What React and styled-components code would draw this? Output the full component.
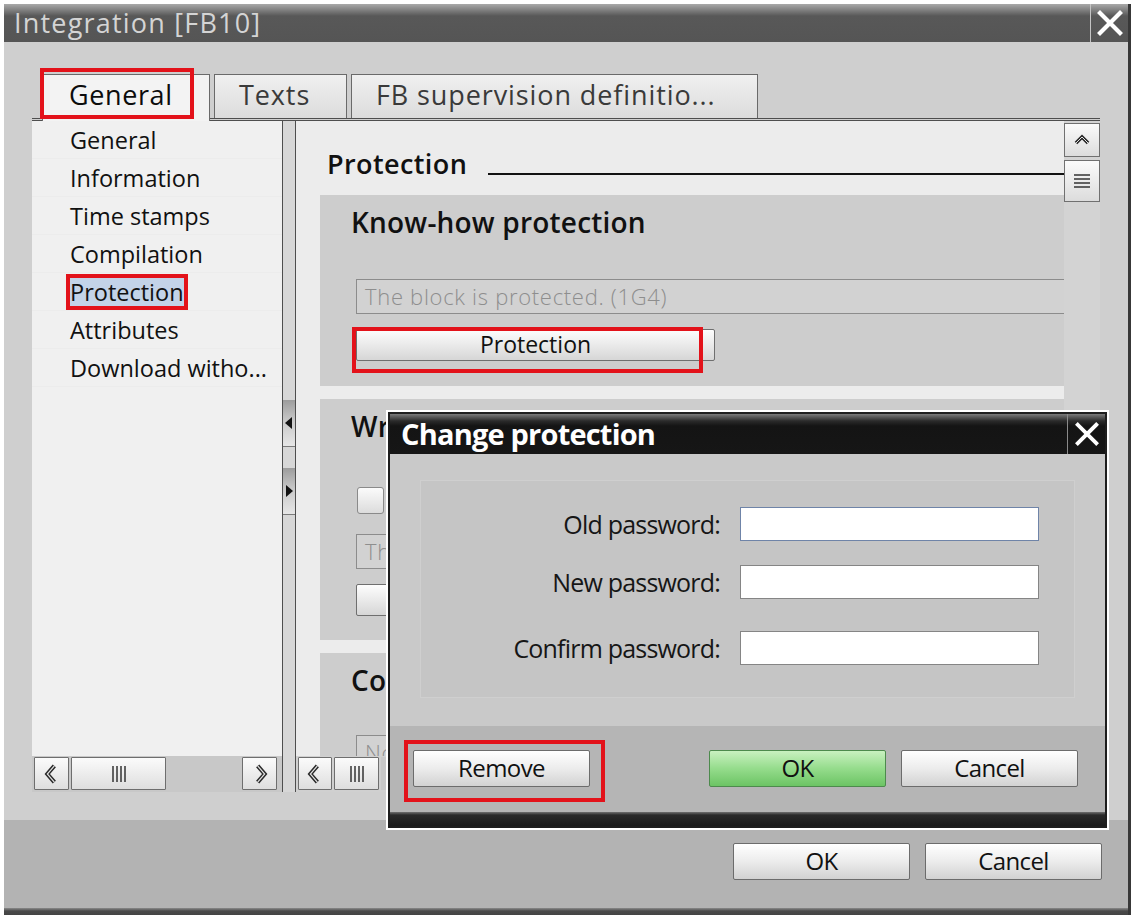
import React from "react";
import styled, { createGlobalStyle, css } from "styled-components";

const GlobalStyle = createGlobalStyle`
  html, body {
    margin: 0;
    padding: 0;
    background: #ffffff;
  }
  body {
    font-family: "Open Sans", "Noto Sans", sans-serif;
    color: #111;
  }
  *, *::before, *::after {
    box-sizing: border-box;
  }
`;

const Page = styled.div`
  width: 1134px;
  height: 920px;
  padding: 4px 0 0 4px;
  overflow: hidden;
`;

const Window = styled.div`
  position: relative;
  width: 1127px;
  height: 911px;
  background: #cfcfcf;
  border-right: 3px solid #383838;
  display: flex;
  flex-direction: column;
`;

const TitleBar = styled.div`
  height: 38px;
  flex: none;
  display: flex;
  align-items: center;
  background: linear-gradient(#a9a9a9 0, #6c6c6c 9px, #585858 12px, #555 100%);
`;

const Title = styled.div`
  flex: 1;
  padding-left: 10px;
  font-size: 27px;
  letter-spacing: 1.2px;
  color: #d4d4d4;
  line-height: 38px;
`;

const CloseBox = styled.div`
  width: 38px;
  height: 100%;
  display: flex;
  align-items: center;
  justify-content: center;
  border-left: 1px solid ${(p) => (p.$dark ? "#8a8a8a" : "#c4c4c4")};
`;

const CloseIcon = ({ size = 26 }) => (
  <svg width={size} height={size} viewBox="0 0 26 26">
    <path d="M3 3 L23 23 M23 3 L3 23" stroke="#fff" strokeWidth="4.2" strokeLinecap="square" />
  </svg>
);

const Body = styled.div`
  flex: 1;
  display: flex;
  flex-direction: column;
  padding: 0 28px 0 28px;
`;

const TabRow = styled.div`
  margin-top: 32px;
  padding-left: 10px;
  display: flex;
  gap: 4px;
  height: 44px;
  position: relative;
  z-index: 2;
`;

const Tab = styled.div`
  position: relative;
  width: ${(p) => p.$w}px;
  height: ${(p) => (p.$active ? 47 : 44)}px;
  border: 1px solid #6a6a6a;
  border-bottom: none;
  background: ${(p) =>
    p.$active ? "#f3f3f3" : "linear-gradient(#f0f0f0, #dcdcdc)"};
  font-size: 27px;
  font-weight: ${(p) => (p.$active ? 500 : 400)};
  color: ${(p) => (p.$active ? "#0c0c0c" : "#3a3a3a")};
  letter-spacing: ${(p) => (p.$active ? "0.6px" : "0.9px")};
  padding: 2px 0 0 ${(p) => p.$pl}px;
  line-height: 36px;
  white-space: nowrap;
  ${(p) =>
    p.$marked &&
    css`
      &::after {
        content: "";
        position: absolute;
        left: -3px;
        top: -7px;
        width: 154px;
        height: 51px;
        border: 4px solid #e3121a;
      }
    `}
`;

const ContentRow = styled.div`
  height: 674px;
  display: flex;
  border-top: 3px double #4e4e4e;
`;

const Nav = styled.div`
  width: 250px;
  background: #f0f0f0;
  display: flex;
  flex-direction: column;
`;

const NavList = styled.div`
  flex: 1;
`;

const NavItem = styled.div`
  height: 38px;
  padding-left: 38px;
  font-size: 23.5px;
  line-height: 38px;
  color: #111;
  border-bottom: 1px solid #ececec;
  white-space: nowrap;
  span {
    display: inline-block;
    line-height: 28px;
    ${(p) =>
      p.$active &&
      css`
        background: #c3d3e8;
        outline: 4px solid #e3121a;
      `}
  }
`;

const ScrollBar = styled.div`
  height: 36px;
  flex: none;
  display: flex;
  align-items: stretch;
  padding: 1px 5px 2px 2px;
  gap: 2px;
  background: #c8c8c8;
`;

const ScrollBtn = styled.div`
  width: ${(p) => p.$w || 35}px;
  flex: none;
  border: 1px solid #6e6e6e;
  border-radius: 1px;
  background: linear-gradient(#fbfbfb, #dedede);
  display: flex;
  align-items: center;
  justify-content: center;
`;

const Track = styled.div`
  flex: 1;
  background: #c8c8c8;
`;

const Splitter = styled.div`
  width: 14px;
  background: #d7d7d7;
  border-left: 1px solid #4e4e4e;
  border-right: 1px solid #4e4e4e;
  display: flex;
  flex-direction: column;
  padding-top: 279px;
  gap: 21px;
`;

const SplitBtn = styled.div`
  height: 47px;
  background: linear-gradient(#9c9c9c, #c8c8c8 45%, #e6e6e6);
  border-bottom: 1px solid #7a7a7a;
  display: flex;
  align-items: center;
  justify-content: center;
`;

const Triangle = ({ dir }) => (
  <svg width="8" height="12" viewBox="0 0 8 12">
    <path d={dir === "left" ? "M7 0 L0 6 L7 12 Z" : "M1 0 L8 6 L1 12 Z"} fill="#111" />
  </svg>
);

const Chevron = ({ dir = "left", size = 28 }) => {
  const pts = {
    left: "14,5 8,12 14,19",
    right: "10,5 16,12 10,19",
    up: "6,15 12,9 18,15",
  }[dir];
  return (
    <svg width={size} height={size} viewBox="0 0 24 24">
      <polyline points={pts} fill="none" stroke="#2a2a2a" strokeWidth="3.6" strokeLinejoin="miter" />
      <polyline points={pts} fill="none" stroke="#e4e4e4" strokeWidth="1" strokeLinejoin="miter" />
    </svg>
  );
};

const Grip = ({ vertical }) =>
  vertical ? (
    <svg width="18" height="16" viewBox="0 0 18 16">
      {[2, 6, 10, 14].map((y) => (
        <line key={y} x1="1" x2="17" y1={y} y2={y} stroke="#333" strokeWidth="1.5" />
      ))}
    </svg>
  ) : (
    <svg width="16" height="18" viewBox="0 0 16 18">
      {[2, 6, 10, 14].map((x) => (
        <line key={x} x1={x} x2={x} y1="1" y2="17" stroke="#333" strokeWidth="1.5" />
      ))}
    </svg>
  );

const RightPanel = styled.div`
  flex: 1;
  display: grid;
  grid-template-columns: 1fr 36px;
  grid-template-rows: 1fr 36px;
  background: #ececec;
  min-width: 0;
`;

const ScrollArea = styled.div`
  overflow: hidden;
  min-width: 0;
  display: flex;
  flex-direction: column;
`;

const HeadRow = styled.div`
  height: 74px;
  flex: none;
  display: flex;
  align-items: flex-end;
  padding: 0 0 16px 31px;
`;

const HeadText = styled.div`
  font-size: 27px;
  font-weight: 600;
  line-height: 30px;
  letter-spacing: 0.4px;
`;

const HeadLine = styled.div`
  flex: 1;
  margin: 0 0 4px 21px;
  border-bottom: 2px solid #111;
`;

const Section = styled.div`
  flex: none;
  margin: 0 0 ${(p) => p.$mb ?? 13}px 24px;
  padding: 12px 0 ${(p) => p.$pb || 0}px 31px;
  background: #cdcdcd;
  display: flex;
  flex-direction: column;
  align-items: flex-start;
`;

const SectionTitle = styled.div`
  font-size: 28px;
  font-weight: 600;
  line-height: 30px;
  letter-spacing: 0.2px;
  white-space: nowrap;
`;

const InfoField = styled.div`
  align-self: stretch;
  margin: ${(p) => p.$mt}px 0 0 5px;
  height: 35px;
  border: 1px solid #8c8c8c;
  border-right: none;
  background: #d2d2d2;
  padding-left: 8px;
  font-size: 22px;
  line-height: 32px;
  color: #8e8e8e;
  font-weight: 300;
  letter-spacing: 0.7px;
  white-space: nowrap;
`;

const PanelButton = styled.div`
  position: relative;
  margin: ${(p) => p.$mt}px 0 0 5px;
  width: ${(p) => p.$w}px;
  height: 32px;
  border: 1px solid #6f6f6f;
  border-radius: 2px;
  background: linear-gradient(#fdfdfd, #e8e8e8 55%, #d6d6d6);
  font-size: 23px;
  line-height: 29px;
  text-align: center;
  white-space: nowrap;
  ${(p) =>
    p.$marked &&
    css`
      &::after {
        content: "";
        position: absolute;
        left: -5px;
        top: -3px;
        width: 351px;
        height: 46px;
        border: 4px solid #e3121a;
      }
    `}
`;

const CheckRow = styled.div`
  margin: ${(p) => p.$mt}px 0 0 6px;
  display: flex;
  align-items: center;
  gap: 12px;
  font-size: 22px;
`;

const CheckBox = styled.div`
  width: 27px;
  height: 27px;
  border: 1px solid #8a8a8a;
  border-radius: 3px;
  background: linear-gradient(#fbfbfb, #dcdcdc);
`;

const VScroll = styled.div`
  background: #d3d3d3;
  display: flex;
  flex-direction: column;
  gap: 3px;
  padding: 2px 0 0 0;
`;

const VBtn = styled.div`
  height: ${(p) => p.$h}px;
  border: 1px solid #707070;
  background: linear-gradient(#fbfbfb, #dcdcdc);
  display: flex;
  align-items: center;
  justify-content: center;
`;

const Corner = styled.div`
  background: #cfcfcf;
`;

const HScroll = styled(ScrollBar)`
  padding: 1px 0 2px 2px;
  background: #d0d0d0;
`;

const Gap = styled.div`
  height: 28px;
  flex: none;
`;

const Footer = styled.div`
  height: 88px;
  flex: none;
  margin: 0 -28px;
  background: #b3b3b3;
  display: flex;
  justify-content: flex-end;
  align-items: flex-start;
  gap: 15px;
  padding: 23px 26px 0 0;
`;

const BottomEdge = styled.div`
  height: 7px;
  flex: none;
  margin: 0 -28px;
  background: linear-gradient(#8a8a8a, #4a4a4a 3px, #444);
`;

const Button = styled.div`
  width: 177px;
  height: 37px;
  flex: none;
  border: 1px solid ${(p) => (p.$green ? "#4d8a4d" : "#6c6c6c")};
  border-radius: 2px;
  background: ${(p) =>
    p.$green
      ? "linear-gradient(#c9f1c0, #95dc8c 50%, #6cc464)"
      : "linear-gradient(#ffffff, #ececec 50%, #d2d2d2)"};
  font-size: 24px;
  letter-spacing: -0.6px;
  line-height: 34px;
  text-align: center;
  color: #111;
`;

const Dialog = styled.div`
  position: absolute;
  left: 382px;
  top: 406px;
  width: 723px;
  height: 420px;
  border: 2px solid #ffffff;
  z-index: 5;
`;

const DialogInner = styled.div`
  height: 100%;
  border: 2px solid #1e1e1e;
  display: flex;
  flex-direction: column;
  background: #c9c9c9;
`;

const DialogTitleBar = styled.div`
  height: 40px;
  flex: none;
  display: flex;
  align-items: center;
  background: linear-gradient(#7a7a7a 0, #2a2a2a 7px, #141414 12px, #161616 100%);
`;

const DialogTitle = styled.div`
  flex: 1;
  padding-left: 11px;
  font-size: 29px;
  font-weight: 700;
  letter-spacing: -0.8px;
  color: #ffffff;
  line-height: 40px;
`;

const DialogBody = styled.div`
  height: 272px;
  flex: none;
  padding: 26px 30px 28px 30px;
`;

const FieldPanel = styled.div`
  height: 100%;
  background: #c5c5c5;
  border: 1px solid #cfcfcf;
  padding-top: 26px;
  display: flex;
  flex-direction: column;
`;

const FieldRow = styled.div`
  display: flex;
  align-items: center;
  gap: 20px;
  margin-top: ${(p) => p.$mt || 0}px;
`;

const FieldLabel = styled.div`
  width: 299px;
  text-align: right;
  font-size: 25px;
  letter-spacing: -0.8px;
  color: #161616;
  white-space: nowrap;
`;

const PassInput = styled.div`
  width: 299px;
  height: 34px;
  background: #ffffff;
  border: 1px solid ${(p) => (p.$focus ? "#6f84a8" : "#858585")};
`;

const DialogButtons = styled.div`
  height: 86px;
  flex: none;
  background: #b5b5b5;
  display: flex;
  align-items: flex-start;
  padding: 24px 27px 0 14px;
  gap: 15px;
`;

const RedFrame = styled.div`
  border: 4px solid #e3121a;
  padding: 6px 11px 11px 5px;
  margin: -10px auto 0 0;
`;

const DialogBottom = styled.div`
  flex: 1;
  background: linear-gradient(#707070, #2a2a2a 3px, #1a1a1a);
`;

const navItems = [
  "General",
  "Information",
  "Time stamps",
  "Compilation",
  "Protection",
  "Attributes",
  "Download witho...",
];

export default function App() {
  return (
    <Page>
      <GlobalStyle />
      <Window>
        <TitleBar>
          <Title>Integration [FB10]</Title>
          <CloseBox>
            <CloseIcon />
          </CloseBox>
        </TitleBar>
        <Body>
          <TabRow>
            <Tab $w={168} $pl={26} $active $marked>
              General
            </Tab>
            <Tab $w={133} $pl={24}>
              Texts
            </Tab>
            <Tab $w={407} $pl={24}>
              FB supervision definitio...
            </Tab>
          </TabRow>
          <ContentRow>
            <Nav>
              <NavList>
                {navItems.map((item) => (
                  <NavItem key={item} $active={item === "Protection"}>
                    <span>{item}</span>
                  </NavItem>
                ))}
              </NavList>
              <ScrollBar>
                <ScrollBtn $w={35}>
                  <Chevron dir="left" />
                </ScrollBtn>
                <ScrollBtn $w={95}>
                  <Grip />
                </ScrollBtn>
                <Track />
                <ScrollBtn $w={35}>
                  <Chevron dir="right" />
                </ScrollBtn>
              </ScrollBar>
            </Nav>
            <Splitter>
              <SplitBtn>
                <Triangle dir="left" />
              </SplitBtn>
              <SplitBtn>
                <Triangle dir="right" />
              </SplitBtn>
            </Splitter>
            <RightPanel>
              <ScrollArea>
                <HeadRow>
                  <HeadText>Protection</HeadText>
                  <HeadLine />
                </HeadRow>
                <Section $pb={25}>
                  <SectionTitle>Know-how protection</SectionTitle>
                  <InfoField $mt={42}>The block is protected. (1G4)</InfoField>
                  <PanelButton $mt={15} $w={359} $marked>
                    Protection
                  </PanelButton>
                </Section>
                <Section $pb={24}>
                  <SectionTitle>Write protection</SectionTitle>
                  <CheckRow $mt={44}>
                    <CheckBox />
                    Read only
                  </CheckRow>
                  <InfoField $mt={19}>The block is not write protected.</InfoField>
                  <PanelButton $mt={15} $w={359}>
                    Write protection
                  </PanelButton>
                </Section>
                <Section $mb={0}>
                  <SectionTitle>Copy protection</SectionTitle>
                  <InfoField $mt={40}>No binding</InfoField>
                </Section>
              </ScrollArea>
              <VScroll>
                <VBtn $h={34}>
                  <Chevron dir="up" size={24} />
                </VBtn>
                <VBtn $h={42}>
                  <Grip vertical />
                </VBtn>
              </VScroll>
              <HScroll>
                <ScrollBtn $w={34}>
                  <Chevron dir="left" />
                </ScrollBtn>
                <ScrollBtn $w={45}>
                  <Grip />
                </ScrollBtn>
                <Track />
              </HScroll>
              <Corner />
            </RightPanel>
          </ContentRow>
          <Gap />
          <Footer>
            <Button>OK</Button>
            <Button>Cancel</Button>
          </Footer>
          <BottomEdge />
        </Body>

        <Dialog>
          <DialogInner>
            <DialogTitleBar>
              <DialogTitle>Change protection</DialogTitle>
              <CloseBox $dark>
                <CloseIcon size={24} />
              </CloseBox>
            </DialogTitleBar>
            <DialogBody>
              <FieldPanel>
                <FieldRow>
                  <FieldLabel>Old password:</FieldLabel>
                  <PassInput $focus />
                </FieldRow>
                <FieldRow $mt={24}>
                  <FieldLabel>New password:</FieldLabel>
                  <PassInput />
                </FieldRow>
                <FieldRow $mt={32}>
                  <FieldLabel>Confirm password:</FieldLabel>
                  <PassInput />
                </FieldRow>
              </FieldPanel>
            </DialogBody>
            <DialogButtons>
              <RedFrame>
                <Button>Remove</Button>
              </RedFrame>
              <Button $green>OK</Button>
              <Button>Cancel</Button>
            </DialogButtons>
            <DialogBottom />
          </DialogInner>
        </Dialog>
      </Window>
    </Page>
  );
}
